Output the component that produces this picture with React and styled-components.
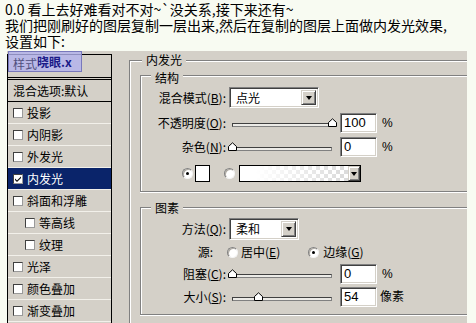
import React from 'react'
import styled, { createGlobalStyle } from 'styled-components'

const GlobalStyle = createGlobalStyle`
  html, body {
    margin: 0;
    padding: 0;
  }
  body {
    background: #f8fbf2;
    color: #000;
    font-family: "Noto Sans CJK SC", "Liberation Sans", sans-serif;
    overflow: hidden;
  }
`

const Page = styled.div`
  width: 476px;
  height: 323px;
  overflow: hidden;
`

const Intro = styled.div`
  box-sizing: border-box;
  height: 51px;
  padding: 1px 0 0 5px;
  font-size: 14px;
  line-height: 16px;
  white-space: nowrap;
`

const IntroLine = styled.div`
  height: 16px;
  overflow: visible;
`

const Dialog = styled.div`
  display: flex;
  width: 460px;
  height: 272px;
  margin-left: 7px;
  background: #d4d0c8;
  font-size: 12px;
  line-height: 14px;
`

/* ---- left list of layer styles ---- */

const StyleList = styled.div`
  position: relative;
  flex: none;
  box-sizing: border-box;
  width: 105px;
  margin-top: 3px;
  border: 1px solid #000;
  border-bottom: none;
`

const ListHeader = styled.div`
  height: 22px;
  border-bottom: 3px double #000;
`

const Watermark = styled.div`
  position: absolute;
  left: 0;
  top: -4px;
  box-sizing: border-box;
  width: 74px;
  height: 21px;
  display: flex;
  align-items: center;
  padding-left: 4px;
  background: rgba(178, 178, 238, 0.8);
  border: 1px solid #7878bc;
  font-size: 12px;
  line-height: 13px;
`

const WatermarkUnder = styled.span`
  color: #50507e;
  margin-top: 3px;
`

const WatermarkName = styled.span`
  color: #1a1a88;
  font-weight: bold;
`

const ListRow = styled.div`
  display: flex;
  align-items: center;
  gap: 4px;
  height: 21px;
  padding-left: ${p => (p.$indent ? 17 : 5)}px;
  border-bottom: 1px solid ${p => (p.$dark ? '#000' : '#f2f0ea')};
  background: ${p => (p.$selected ? '#0a246a' : 'transparent')};
  color: ${p => (p.$selected ? '#fff' : '#000')};
`

const Check = styled.span`
  flex: none;
  box-sizing: border-box;
  width: 10px;
  height: 10px;
  background: #fff;
  border: 1px solid;
  border-color: #404040 #9a9a9a #9a9a9a #404040;
  display: flex;
  align-items: center;
  justify-content: center;
`

/* ---- right side: group boxes ---- */

const Main = styled.div`
  flex: 1;
  padding: 9px 0 0 17px;
  overflow: hidden;
`

const Group = styled.div`
  position: relative;
  box-sizing: border-box;
  height: ${p => p.$h};
  margin: ${p => p.$m || 0};
  border-top: 1px solid #808080;
  border-left: 1px solid #808080;
  border-bottom: ${p => (p.$open ? 'none' : '1px solid #808080')};
  box-shadow: inset 1px 1px 0 #fff${p => (p.$open ? '' : ', 0 1px 0 #fff')};
`

const Legend = styled.span`
  position: absolute;
  top: ${p => p.$y ?? -6}px;
  left: ${p => p.$x}px;
  padding: 0 4px;
  background: #d4d0c8;
  line-height: 12px;
`

const Field = styled.div`
  display: flex;
  align-items: center;
  height: ${p => p.$h}px;
  margin-top: ${p => p.$mt}px;
  padding-left: ${p => p.$pl || 0}px;
`

const Label = styled.span`
  flex: none;
  width: ${p => p.$w || 85}px;
  text-align: right;
  white-space: nowrap;
`

const Select = styled.div`
  display: flex;
  align-items: stretch;
  box-sizing: border-box;
  width: ${p => p.$w}px;
  height: 100%;
  margin-left: 3px;
  background: #fff;
  border: 1px solid;
  border-color: #808080 #fff #fff #808080;
  box-shadow: inset 1px 1px 0 #404040, inset -1px -1px 0 #d4d0c8;
  padding: 2px 2px 2px 6px;
`

const SelectText = styled.span`
  flex: 1;
  display: flex;
  align-items: center;
`

const DropButton = styled.span`
  flex: none;
  box-sizing: border-box;
  width: ${p => p.$w || 15}px;
  background: #d4d0c8;
  border: 1px solid;
  border-color: #d4d0c8 #404040 #404040 #d4d0c8;
  box-shadow: inset 1px 1px 0 #fff, inset -1px -1px 0 #808080;
  display: flex;
  align-items: center;
  justify-content: center;

  &::after {
    content: '';
    border-left: 3.5px solid transparent;
    border-right: 3.5px solid transparent;
    border-top: 4px solid #000;
  }
`

const Slider = styled.div`
  position: relative;
  flex: none;
  width: 108px;
  height: 100%;
  margin-left: 2px;
`

const Track = styled.div`
  box-sizing: border-box;
  height: 4px;
  margin: 10px 4px 0;
  background: #ecebe7;
  border: 1px solid;
  border-color: #404040 #808080 #808080 #404040;
`

const Thumb = styled.svg`
  position: absolute;
  top: 5px;
  width: 9px;
  height: 9px;
`

const NumBox = styled.div`
  box-sizing: border-box;
  width: 37px;
  height: 20px;
  margin-left: 4px;
  padding-left: 3px;
  background: #fff;
  border: 1px solid;
  border-color: #808080 #fff #fff #808080;
  box-shadow: inset 1px 1px 0 #404040, inset -1px -1px 0 #d4d0c8;
  font-family: "Liberation Sans", sans-serif;
  font-size: 13px;
  line-height: 18px;
`

const Unit = styled.span`
  margin-left: ${p => p.$ml || 5}px;
  font-family: "Liberation Sans", "Noto Sans CJK SC", sans-serif;
`

const Radio = styled.span`
  flex: none;
  box-sizing: border-box;
  width: 11px;
  height: 11px;
  margin-left: ${p => p.$ml || 0}px;
  border-radius: 50%;
  background: #fff;
  border: 1px solid;
  border-color: #808080 #f4f4f4 #f4f4f4 #808080;
  box-shadow: inset 1px 1px 0 #b0aca4;
  display: flex;
  align-items: center;
  justify-content: center;

  &::after {
    content: '';
    display: ${p => (p.$on ? 'block' : 'none')};
    width: 3px;
    height: 3px;
    border-radius: 50%;
    background: #000;
  }
`

const RadioText = styled.span`
  margin-left: ${p => p.$ml || 3}px;
  white-space: nowrap;
`

const Swatch = styled.span`
  flex: none;
  box-sizing: border-box;
  width: 15px;
  height: 17px;
  margin-left: 2px;
  background: #fff;
  border: 1px solid #000;
`

const GradientBox = styled.div`
  display: flex;
  box-sizing: border-box;
  width: 122px;
  height: 17px;
  margin-left: 4px;
  border: 1px solid #000;
`

const GradientFill = styled.span`
  flex: 1;
  background:
    linear-gradient(to right, #fff 15%, rgba(255, 255, 255, 0) 95%),
    conic-gradient(#dcdcdc 25%, #fff 0 50%, #dcdcdc 0 75%, #fff 0) 0 0 / 8px 8px;
`

const layerStyles = [
  { name: '投影' },
  { name: '内阴影' },
  { name: '外发光' },
  { name: '内发光', checked: true },
  { name: '斜面和浮雕' },
  { name: '等高线', indent: true },
  { name: '纹理', indent: true },
  { name: '光泽' },
  { name: '颜色叠加' },
  { name: '渐变叠加' },
]

const SliderControl = ({ pct }) => (
  <Slider>
    <Track />
    <Thumb viewBox="0 0 9 9" style={{ left: `${pct - 4.5 + 4}px` }}>
      <path d="M0.5 8.5 V4.5 L4.5 0.8 L8.5 4.5 V8.5 Z" fill="#fff" stroke="#000" strokeWidth="1" />
    </Thumb>
  </Slider>
)

const App = () => {
  return (
    <Page>
      <GlobalStyle />
      <Intro>
        <IntroLine>0.0 看上去好难看对不对~`没关系,接下来还有~</IntroLine>
        <IntroLine>我们把刚刷好的图层复制一层出来,然后在复制的图层上面做内发光效果,</IntroLine>
        <IntroLine>设置如下:</IntroLine>
      </Intro>

      <Dialog>
        <StyleList>
          <ListHeader />
          <Watermark>
            <WatermarkUnder>样式</WatermarkUnder>
            <WatermarkName>晓眼.x</WatermarkName>
          </Watermark>
          <ListRow $dark>混合选项:默认</ListRow>
          {layerStyles.map(s => (
            <ListRow key={s.name} $indent={s.indent} $selected={s.checked}>
              <Check>
                {s.checked && (
                  <svg width="8" height="8" viewBox="0 0 8 8">
                    <path d="M1 3.5 L3 5.5 L7 1.5 L7 3 L3 7 L1 5 Z" fill="#000" />
                  </svg>
                )}
              </Check>
              {s.name}
            </ListRow>
          ))}
        </StyleList>

        <Main>
          <Group $open $h="100%">
            <Legend $x={12} $y={-7}>内发光</Legend>

            <Group $h="117px" $m="14px 0 0 10px">
              <Legend $x={10} $y={-4}>结构</Legend>
              <Field $h={21} $mt={11}>
                <Label>混合模式(<u>B</u>):</Label>
                <Select $w={90}>
                  <SelectText>点光</SelectText>
                  <DropButton />
                </Select>
              </Field>
              <Field $h={20} $mt={5}>
                <Label>不透明度(<u>O</u>):</Label>
                <SliderControl pct={100} />
                <NumBox>100</NumBox>
                <Unit>%</Unit>
              </Field>
              <Field $h={20} $mt={4}>
                <Label>杂色(<u>N</u>):</Label>
                <SliderControl pct={0} />
                <NumBox>0</NumBox>
                <Unit>%</Unit>
              </Field>
              <Field $h={17} $mt={8} $pl={41}>
                <Radio $on />
                <Swatch />
                <Radio $ml={14} />
                <GradientBox>
                  <GradientFill />
                  <DropButton $w={12} />
                </GradientBox>
              </Field>
            </Group>

            <Group $h="108px" $m="15px 0 0 10px">
              <Legend $x={10}>图素</Legend>
              <Field $h={22} $mt={10}>
                <Label>方法(<u>Q</u>):</Label>
                <Select $w={70}>
                  <SelectText>柔和</SelectText>
                  <DropButton />
                </Select>
              </Field>
              <Field $h={16} $mt={4}>
                <Label $w={72}>源:</Label>
                <Radio $ml={14} />
                <RadioText>居中(<u>E</u>)</RadioText>
                <Radio $ml={28} $on />
                <RadioText $ml={4}>边缘(<u>G</u>)</RadioText>
              </Field>
              <Field $h={20} $mt={4}>
                <Label>阻塞(<u>C</u>):</Label>
                <SliderControl pct={0} />
                <NumBox>0</NumBox>
                <Unit>%</Unit>
              </Field>
              <Field $h={20} $mt={3}>
                <Label>大小(<u>S</u>):</Label>
                <SliderControl pct={26} />
                <NumBox>54</NumBox>
                <Unit $ml={3}>像素</Unit>
              </Field>
            </Group>
          </Group>
        </Main>
      </Dialog>
    </Page>
  )
}

export default App
